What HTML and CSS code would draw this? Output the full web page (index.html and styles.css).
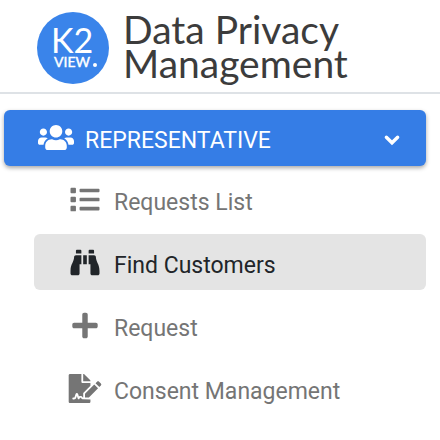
FILE: index.html
```html
<!DOCTYPE html>
<html lang="en">
<head>
<meta charset="utf-8">
<meta name="viewport" content="width=device-width, initial-scale=1">
<title>Data Privacy Management</title>
<link rel="stylesheet" href="styles.css">
</head>
<body>
<header class="brand">
  <svg class="logo" viewBox="0 0 72 72" role="img" aria-label="K2 View">
    <circle cx="36" cy="36" r="36" fill="#3a84ea"/>
    <text class="logo-main" x="14" y="41">K2</text>
    <text class="logo-sub" x="17" y="55">VIEW</text>
    <circle cx="58" cy="53" r="2" fill="#fff"/>
  </svg>
  <h1 class="title">Data Privacy<br>Management</h1>
</header>
<nav class="menu">
  <button class="group" type="button" aria-expanded="true">
    <svg class="icon-users" viewBox="0 0 640 512" aria-hidden="true"><path d="M96 224c35.3 0 64-28.7 64-64s-28.700-64-64-64-64 28.700-64 64 28.700 64 64 64zm448 0c35.300 0 64-28.700 64-64s-28.700-64-64-64-64 28.700-64 64 28.700 64 64 64zm32 32h-64c-17.600 0-33.500 7.100-45.100 18.600 40.300 22.100 68.900 62 75.100 109.400h66c17.700 0 32-14.300 32-32v-32c0-35.300-28.700-64-64-64zm-256 0c61.900 0 112-50.100 112-112S381.900 32 320 32 208 82.100 208 144s50.100 112 112 112zm76.800 32h-8.300c-20.800 10-43.900 16-68.500 16s-47.600-6-68.500-16h-8.300C179.600 288 128 339.600 128 403.200V432c0 26.500 21.500 48 48 48h288c26.500 0 48-21.500 48-48v-28.800c0-63.600-51.600-115.200-115.200-115.200zm-223.700-13.400C161.500 263.100 145.600 256 128 256H64c-35.300 0-64 28.700-64 64v32c0 17.700 14.300 32 32 32h65.900c6.300-47.400 34.900-87.300 75.200-109.400z"/></svg>
    <span>REPRESENTATIVE</span>
    <svg class="chevron" viewBox="0 0 16 12" aria-hidden="true"><path d="M3 3.500 8 8.500 13 3.500"/></svg>
  </button>
  <ul class="items">
    <li><a class="item" href="#requests">
      <svg class="icon" viewBox="0 0 512 512" aria-hidden="true"><path d="M80 368H16a16 16 0 0 0-16 16v64a16 16 0 0 0 16 16h64a16 16 0 0 0 16-16v-64a16 16 0 0 0-16-16zm0-320H16A16 16 0 0 0 0 64v64a16 16 0 0 0 16 16h64a16 16 0 0 0 16-16V64a16 16 0 0 0-16-16zm0 160H16a16 16 0 0 0-16 16v64a16 16 0 0 0 16 16h64a16 16 0 0 0 16-16v-64a16 16 0 0 0-16-16zm416 176H176a16 16 0 0 0-16 16v32a16 16 0 0 0 16 16h320a16 16 0 0 0 16-16v-32a16 16 0 0 0-16-16zm0-320H176a16 16 0 0 0-16 16v32a16 16 0 0 0 16 16h320a16 16 0 0 0 16-16V80a16 16 0 0 0-16-16zm0 160H176a16 16 0 0 0-16 16v32a16 16 0 0 0 16 16h320a16 16 0 0 0 16-16v-32a16 16 0 0 0-16-16z"/></svg>
      <span>Requests List</span></a></li>
    <li><a class="item active" href="#customers" aria-current="page">
      <svg class="icon" viewBox="0 0 512 512" aria-hidden="true"><path d="M416 48c0-8.840-7.160-16-16-16h-64c-8.840 0-16 7.160-16 16v48h96V48zM63.910 159.990C61.400 253.840 3.460 274.220 0 404v44c0 17.670 14.330 32 32 32h96c17.670 0 32-14.330 32-32V288h32V128H95.840c-17.630 0-31.450 14.370-31.930 31.990zm384.180 0c-.480-17.620-14.300-31.990-31.930-31.990H320v160h32v160c0 17.670 14.330 32 32 32h96c17.670 0 32-14.330 32-32v-44c-3.460-129.780-61.400-150.160-63.910-244.010zM176 32h-64c-8.840 0-16 7.160-16 16v48h96V48c0-8.840-7.160-16-16-16zm48 256h64V128h-64v160z"/></svg>
      <span>Find Customers</span></a></li>
    <li><a class="item" href="#request">
      <svg class="icon" viewBox="-32 0 512 512" aria-hidden="true"><path d="M416 208H272V64c0-17.670-14.330-32-32-32h-32c-17.670 0-32 14.330-32 32v144H32c-17.670 0-32 14.330-32 32v32c0 17.670 14.330 32 32 32h144v144c0 17.670 14.330 32 32 32h32c17.670 0 32-14.330 32-32V304h144c17.670 0 32-14.330 32-32v-32c0-17.670-14.330-32-32-32z"/></svg>
      <span>Request</span></a></li>
    <li><a class="item" href="#consent">
      <svg class="icon" viewBox="0 0 576 512" aria-hidden="true"><path d="M218.170 424.140c-2.950-5.920-8.090-6.520-10.170-6.520s-7.220.590-10.020 6.190l-7.670 15.340c-6.370 12.780-25.030 11.370-29.480-2.090L144 386.590l-10.610 31.880c-5.890 17.660-22.380 29.530-41 29.530H80c-8.840 0-16-7.160-16-16s7.160-16 16-16h12.390c4.830 0 9.110-3.080 10.640-7.660l18.190-54.640c3.300-9.810 12.440-16.410 22.780-16.410s19.480 6.590 22.770 16.410l13.880 41.640c19.750-16.190 54.060-9.700 66 14.160 1.890 3.780 5.490 5.950 9.360 6.260v-82.120l128-127.090V160H248c-13.200 0-24-10.800-24-24V0H24C10.700 0 0 10.700 0 24v464c0 13.300 10.700 24 24 24h336c13.300 0 24-10.700 24-24v-40l-128-.110c-16.120-.310-30.580-9.280-37.830-23.750zM384 121.900c0-6.300-2.500-12.400-7-16.900L279.100 7c-4.500-4.500-10.600-7-17-7H256v128h128v-6.100zm-96 225.060V416h68.990l161.680-162.780-67.880-67.880L288 346.960zm280.540-179.630l-31.870-31.870c-9.940-9.940-26.070-9.940-36.010 0l-27.250 27.250 67.880 67.880 27.250-27.250c9.950-9.940 9.950-26.070 0-36.010z"/></svg>
      <span>Consent Management</span></a></li>
  </ul>
</nav>
</body>
</html>
```
FILE: styles.css
```css
* {
  box-sizing: border-box;
}

body {
  margin: 0;
  background: #fff;
  color: #757575;
  font: 23px/28px Roboto, "Liberation Sans", sans-serif;
}

.brand {
  display: flex;
  align-items: flex-start;
  gap: 14px;
  padding: 12px 16px 8px 37px;
  border-bottom: 2px solid #dee2e6;
}

.logo {
  flex: none;
  width: 72px;
  height: 72px;
}

.logo text {
  fill: #fff;
  font-family: Lato, sans-serif;
}

.logo-main {
  font-size: 34px;
}

.logo-sub {
  font-size: 14px;
  stroke: #fff;
  stroke-width: 0.4px;
}

.title {
  margin: 0;
  color: #3c3c3c;
  font: 400 39px/34px Lato, sans-serif;
}

.menu {
  padding: 16px 14px 16px 4px;
}

.group {
  display: flex;
  align-items: center;
  gap: 11px;
  width: 100%;
  height: 56px;
  padding: 0 25px 2px 34px;
  border: 0;
  border-radius: 6px;
  background: #357de6;
  box-shadow: 0 2px 4px rgba(0, 0, 0, 0.35);
  color: #fff;
  font: inherit;
  text-align: left;
}

.group span {
  padding-top: 8px;
}

.icon-users {
  width: 36px;
  height: 29px;
  fill: #fff;
}

.chevron {
  width: 18px;
  height: 20px;
  margin-left: auto;
  padding-top: 6px;
  fill: none;
  stroke: #fff;
  stroke-width: 3;
  stroke-linecap: round;
}

.items {
  display: grid;
  gap: 7px;
  margin: 5px 0 0 30px;
  padding: 0;
  list-style: none;
}

.item {
  display: flex;
  align-items: center;
  gap: 12px;
  height: 56px;
  padding: 0 34px;
  border-radius: 6px;
  color: inherit;
  text-decoration: none;
  white-space: nowrap;
}

.item span {
  padding-top: 7px;
}

.active {
  background: #e4e4e4;
  color: #212529;
}

.icon {
  flex: none;
  width: 34px;
  height: 29px;
  fill: currentColor;
}
```
